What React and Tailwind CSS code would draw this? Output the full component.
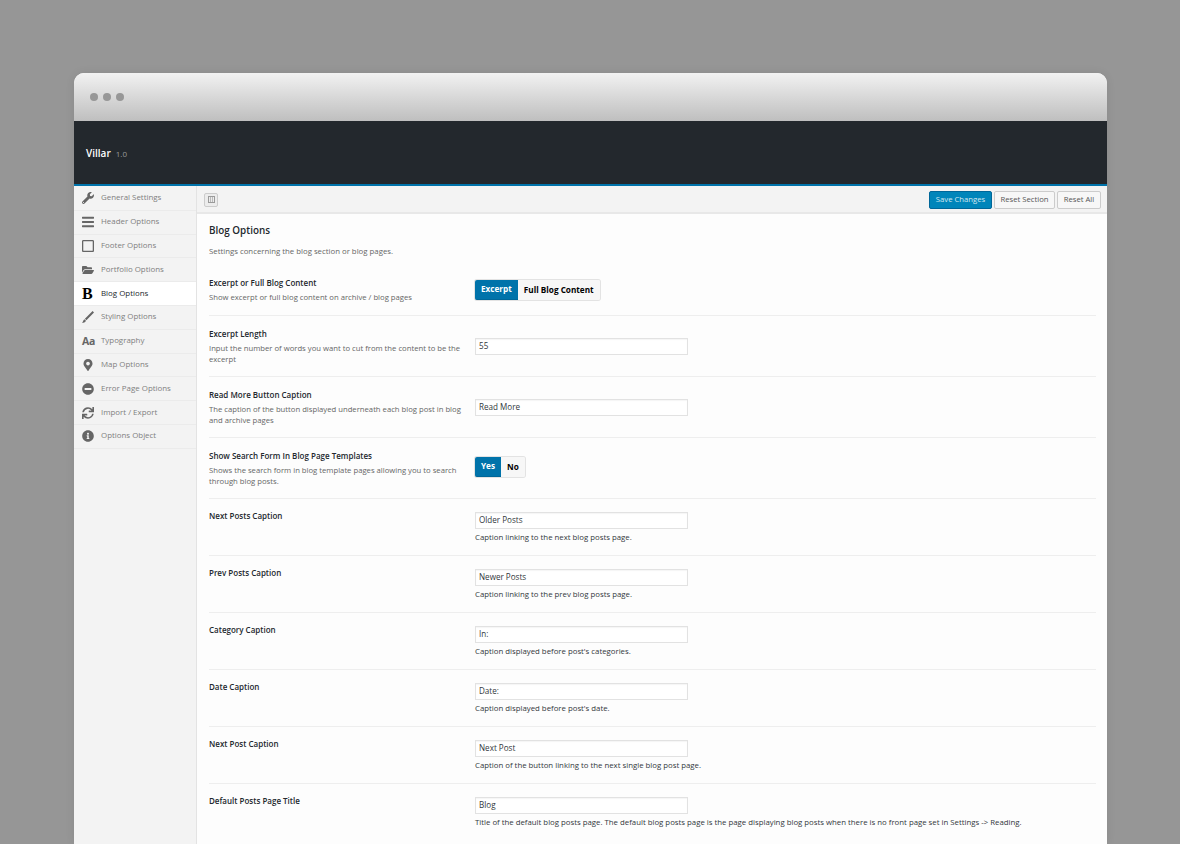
import React from "react";
import { FaWrench, FaBars, FaRegSquare, FaFolderOpen, FaMapMarkerAlt, FaMinusCircle, FaSync, FaInfoCircle } from "react-icons/fa";

const Slash = ({ className }) => (
  <svg viewBox="0 0 12 12" className={className} fill="currentColor">
    <path d="M10.6 0 L12 1.4 L4.4 9.2 L2.9 7.7 Z M2.5 8.2 L4 9.7 C3.4 11.2 1.5 11.8 0 12 C1 11 1.2 9 2.5 8.2 Z" />
  </svg>
);

const Aa = () => <span className="text-[10.5px] font-bold leading-none tracking-[-0.3px]">Aa</span>;
const SerifB = () => <span className="text-[16px] font-bold leading-none font-['Liberation_Serif',serif]">B</span>;

const navItems = [
  { label: "General Settings", icon: <FaWrench className="w-[12px] h-[12px]" /> },
  { label: "Header Options", icon: <FaBars className="w-[12px] h-[14px]" /> },
  { label: "Footer Options", icon: <FaRegSquare className="w-[12px] h-[14px]" /> },
  { label: "Portfolio Options", icon: <FaFolderOpen className="w-[12px] h-[12px]" /> },
  { label: "Blog Options", icon: <SerifB />, active: true },
  { label: "Styling Options", icon: <Slash className="w-[12px] h-[12px]" /> },
  { label: "Typography", icon: <Aa /> },
  { label: "Map Options", icon: <FaMapMarkerAlt className="w-[10px] h-[12px] ml-[1px]" /> },
  { label: "Error Page Options", icon: <FaMinusCircle className="w-[12px] h-[12px]" /> },
  { label: "Import / Export", icon: <FaSync className="w-[12px] h-[12px]" /> },
  { label: "Options Object", icon: <FaInfoCircle className="w-[12px] h-[12px]" /> },
];

function Input({ value }) {
  return (
    <div className="w-[213px] h-[17px] bg-white border border-[#e2e2e2] pl-[3px] flex items-center text-[8.1px] text-[#32373c] shadow-[inset_0_1px_1px_rgba(0,0,0,0.04)]">
      {value}
    </div>
  );
}

function Toggle({ on, off }) {
  return (
    <div className="flex h-[20px] text-[8.2px] font-bold rounded-[2px] shadow-[0_0_0_1px_#e3e3e3]">
      <div className="bg-[#0073aa] text-white px-[6px] flex items-center rounded-l-[2px] border-b border-[#006799]">{on}</div>
      <div className="bg-[#f7f7f7] text-black px-[6px] flex items-center rounded-r-[2px]">{off}</div>
    </div>
  );
}

function FieldRow({ title, desc, height, pad, children }) {
  return (
    <div className={`flex border-b border-[#eeeeee] ${height}`}>
      <div className="w-[266px] pr-[10px] shrink-0">
        <div className="text-[8px] font-semibold text-[#23282d] leading-[13px]">{title}</div>
        <div className="text-[7.7px] text-[#666666] leading-[10.5px] mt-[3px]">{desc}</div>
      </div>
      <div className={pad}>{children}</div>
    </div>
  );
}

function CaptionRow({ title, value, note, last }) {
  return (
    <div className={`flex h-[46px] ${last ? "" : "border-b border-[#eeeeee]"}`}>
      <div className="w-[266px] shrink-0 text-[8px] font-semibold text-[#23282d] leading-[12px]">{title}</div>
      <div className="pt-[2px]">
        <Input value={value} />
        <div className="text-[7.8px] text-[#32373c] leading-[11px] mt-[3px] whitespace-nowrap">{note}</div>
      </div>
    </div>
  );
}

export default function App() {
  return (
    <div className="h-[844px] overflow-hidden bg-[#969696] pt-[73px] pl-[74px] pr-[73px] font-['Open_Sans',sans-serif]">
      <div className="h-[771px] overflow-hidden rounded-t-[10px] shadow-[0_0_10px_rgba(0,0,0,0.08)] bg-white">
        {/* Window chrome */}
        <div className="h-[48px] bg-gradient-to-b from-[#f2f2f2] to-[#bfbfbf] flex items-center gap-[5px] pl-[16px]">
          <span className="w-[8px] h-[8px] rounded-full bg-[#979797]" />
          <span className="w-[8px] h-[8px] rounded-full bg-[#979797]" />
          <span className="w-[8px] h-[8px] rounded-full bg-[#979797]" />
        </div>

        {/* Header */}
        <div className="h-[65px] bg-[#23282d] border-b-2 border-[#0073aa] flex items-center pl-[12px] pt-[1px]">
          <span className="text-[10px] font-semibold text-white">Villar</span>
          <span className="text-[8px] text-[#999999] ml-[5px] mt-[1px]">1.0</span>
        </div>

        <div className="flex h-[658px]">
          {/* Sidebar */}
          <div className="w-[123px] shrink-0 bg-[#f3f3f3] border-r border-[#e3e3e3] pt-[1px]">
            {navItems.map((item) => (
              <div
                key={item.label}
                className={`h-[23.8px] flex items-center border-b border-[#ebebeb] ${item.active ? "bg-white text-[#23282d]" : "text-[#808080]"}`}
              >
                <span className={`w-[27px] pl-[8px] shrink-0 flex items-center ${item.active ? "text-black" : "text-[#666666]"}`}>
                  {item.icon}
                </span>
                <span className="text-[7.9px] font-medium">{item.label}</span>
              </div>
            ))}
          </div>

          <div className="flex-1 min-w-0 bg-[#fdfdfd]">
            {/* Toolbar */}
            <div className="h-[28px] bg-[#f3f3f3] border-b-2 border-[#e8e8e8] flex items-center justify-between pl-[7px] pr-[6px] pt-[1px]">
              <div className="w-[14px] h-[14px] rounded-[2px] border border-[#cccccc] bg-[#ececec] flex items-center justify-center">
                <svg viewBox="0 0 9 9" className="w-[9px] h-[9px]" fill="#9a9a9a">
                  <path d="M1 1h7v7H1z M2 2v5h1.4V2z M4 2v5h1V2z M5.6 2v5H7V2z" fillRule="evenodd" />
                </svg>
              </div>
              <div className="flex gap-[2px] text-[7.7px]">
                <div className="h-[18px] w-[63px] flex items-center justify-center rounded-[2px] bg-[#0085ba] border border-[#006799] text-[#d5e8f1]">Save Changes</div>
                <div className="h-[18px] w-[61px] flex items-center justify-center rounded-[2px] bg-[#f7f7f7] border border-[#cccccc] text-[#555555]">Reset Section</div>
                <div className="h-[18px] w-[44px] flex items-center justify-center rounded-[2px] bg-[#f7f7f7] border border-[#cccccc] text-[#555555]">Reset All</div>
              </div>
            </div>

            {/* Content */}
            <div className="pl-[12px] pr-[11px]">
              <div className="text-[9.9px] font-semibold text-[#23282d] leading-[14px] mt-[9px]">Blog Options</div>
              <div className="text-[7.8px] text-[#666666] leading-[11px] mt-[9px] mb-[19px]">Settings concerning the blog section or blog pages.</div>
              <div className="flex flex-col gap-[11px]">
                <FieldRow title="Excerpt or Full Blog Content" desc="Show excerpt or full blog content on archive / blog pages" height="h-[40px]" pad="pt-[4px]">
                  <Toggle on="Excerpt" off="Full Blog Content" />
                </FieldRow>
                <FieldRow title="Excerpt Length" desc="Input the number of words you want to cut from the content to be the excerpt" height="h-[50px]" pad="pt-[11px]">
                  <Input value="55" />
                </FieldRow>
                <FieldRow title="Read More Button Caption" desc="The caption of the button displayed underneath each blog post in blog and archive pages" height="h-[50px]" pad="pt-[11px]">
                  <Input value="Read More" />
                </FieldRow>
                <FieldRow title="Show Search Form In Blog Page Templates" desc="Shows the search form in blog template pages allowing you to search through blog posts." height="h-[50px]" pad="pt-[8px]">
                  <Toggle on="Yes" off="No" />
                </FieldRow>
              </div>
              <div className="mt-[11px] flex flex-col gap-[11px]">
                <CaptionRow title="Next Posts Caption" value="Older Posts" note="Caption linking to the next blog posts page." />
                <CaptionRow title="Prev Posts Caption" value="Newer Posts" note="Caption linking to the prev blog posts page." />
                <CaptionRow title="Category Caption" value="In:" note="Caption displayed before post's categories." />
                <CaptionRow title="Date Caption" value="Date:" note="Caption displayed before post's date." />
                <CaptionRow title="Next Post Caption" value="Next Post" note="Caption of the button linking to the next single blog post page." />
                <CaptionRow title="Default Posts Page Title" value="Blog" note="Title of the default blog posts page. The default blog posts page is the page displaying blog posts when there is no front page set in Settings -> Reading." last />
              </div>
            </div>
          </div>
        </div>
      </div>
    </div>
  );
}
